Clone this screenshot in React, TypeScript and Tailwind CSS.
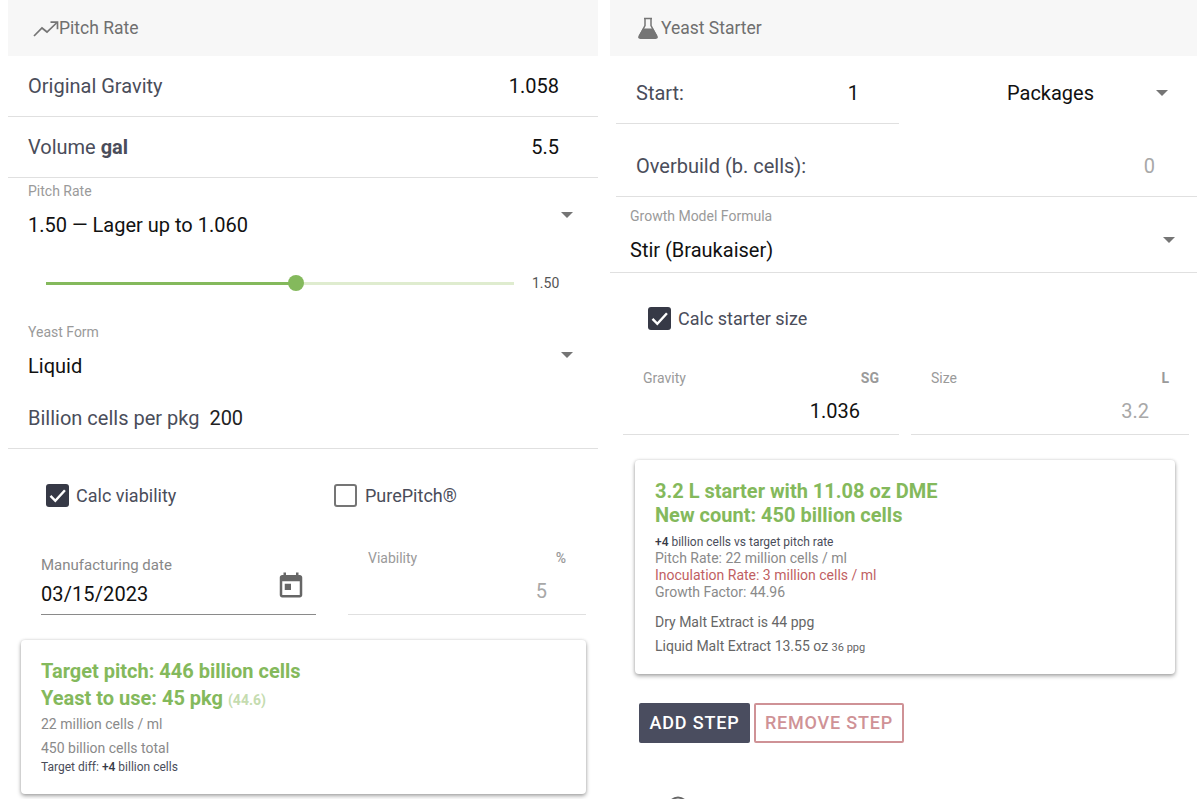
import React from "react";

const Arrow = ({ className = "" }: { className?: string }) => (
  <svg width="12" height="6" viewBox="0 0 10 5" className={className}><path d="M0 0l5 5 5-5z" fill="#757575" /></svg>
);

const Check = ({ on, className = "" }: { on: boolean; className?: string }) => (
  <span className={`w-[23px] h-[23px] rounded-[3px] flex items-center justify-center shrink-0 ${on ? "bg-[#363946]" : "border-2 border-[#757575] bg-white"} ${className}`}>
    {on && (
      <svg width="21" height="21" viewBox="0 0 24 24"><path d="M4 12.5l5.500 5.500L20.500 6" fill="none" stroke="#fff" strokeWidth="2.800" /></svg>
    )}
  </span>
);

const Head = ({ icon, title, className = "" }: { icon: React.ReactNode; title: string; className?: string }) => (
  <div className={`h-14 bg-[#f7f7f7] flex items-center text-[17.5px] text-[#6f6f6f] ${className}`}>
    {icon}
    <span>{title}</span>
  </div>
);

export default function App() {
  return (
    <div className="w-[1197px] h-[799px] overflow-hidden bg-white flex items-start pl-2 text-[#4a4d5a]" style={{ fontFamily: "Roboto, sans-serif" }}>
      {/* Left */}
      <div className="w-[590px] shrink-0 flex flex-col">
        <Head
          className="pl-[25px]"
          title="Pitch Rate"
          icon={
            <svg width="26" height="16" viewBox="0 0 26 16" fill="none" stroke="#757575" strokeWidth="1.700" className="mt-0.5">
              <path d="M1 15l8-8 5 4 10-9.500" />
              <path d="M17.500 1.200h7v7" />
            </svg>
          }
        />
        <div className="h-[61px] border-b border-[#e0e0e0] pl-5 pr-[39px] flex items-center justify-between text-xl">
          <span>Original Gravity</span>
          <span className="text-[#111]">1.058</span>
        </div>
        <div className="h-[61px] border-b border-[#e0e0e0] pl-5 pr-[39px] flex items-center justify-between text-xl">
          <span>Volume <b className="font-bold">gal</b></span>
          <span className="text-[#111]">5.5</span>
        </div>
        <div className="relative pl-5 pt-[5px]">
          <div className="text-sm leading-4 text-[#9a9a9a]">Pitch Rate</div>
          <div className="mt-[14px] text-xl leading-[24px] text-[#111]">1.50 — Lager up to 1.060</div>
          <Arrow className="absolute right-[25px] top-[34px]" />
        </div>
        <div className="h-[73px] pl-[38px] flex items-center pt-[19px]">
          <div className="w-[468px] h-[3px] bg-[#dfeccf] relative">
            <div className="absolute left-0 top-0 h-[3px] w-[250px] bg-[#84b95c]" />
            <div className="absolute left-[242px] top-[-7px] w-4 h-4 rounded-full bg-[#84b95c]" />
          </div>
          <span className="ml-[18px] text-sm text-[#555]">1.50</span>
        </div>
        <div className="relative pl-5 pt-[14px]">
          <div className="text-sm leading-4 text-[#9a9a9a]">Yeast Form</div>
          <div className="mt-[14px] text-xl leading-[24px] text-[#111]">Liquid</div>
          <Arrow className="absolute right-[25px] top-[42px]" />
        </div>
        <div className="h-[66px] border-b border-[#e0e0e0] pl-5 flex items-center text-xl pt-[9px] pb-[5px] mt-[5px]">
          <span>Billion cells per pkg</span>
          <span className="ml-[10px] text-[#222]">200</span>
        </div>
        <div className="pl-[38px] mt-[35px] flex items-center h-[23px] text-lg">
          <Check on />
          <span className="ml-[7px] w-[258px]">Calc viability</span>
          <Check on={false} />
          <span className="ml-[8px]">PurePitch®</span>
        </div>
        <div className="mt-[40px] flex pl-[33px] h-[68px]">
          <div className="relative w-[275px] h-[68px] border-b border-[#8a8a8a] pt-[8px]">
            <div className="text-[15px] leading-5 text-[#888]">Manufacturing date</div>
            <div className="mt-[7px] text-[20px] leading-6 tracking-[0.1px] text-[#111]">03/15/2023</div>
            <svg width="30" height="30" viewBox="0 0 24 24" className="absolute right-[10px] top-[23px]"><path fill="#666" d="M19 4h-1V2h-2v2H8V2H6v2H5c-1.110 0-1.990.9-1.990 2L3 20c0 1.100.89 2 2 2h14c1.100 0 2-.9 2-2V6c0-1.100-.9-2-2-2zm0 16H5V9h14v11zM7 11h5v5H7z" /></svg>
          </div>
          <div className="relative ml-8 w-[238px] h-[68px] border-b border-[#e0e0e0]">
            <div className="flex justify-between pl-5 pr-5 text-sm leading-4 text-[#9a9a9a] pt-[3px]">
              <span>Viability</span>
              <b className="font-medium">%</b>
            </div>
            <div className="absolute right-[39px] top-[32px] text-xl leading-6 text-[#a8a8a8]">5</div>
          </div>
        </div>
        <div className="ml-[13px] mt-[25px] w-[565px] h-[154px] rounded-[4px] bg-white shadow-[0_2px_4px_rgba(0,0,0,0.35),0_0_3px_rgba(0,0,0,0.12)] pl-5 pt-[18px]">
          <div className="text-xl leading-[27px] font-bold text-[#84b95c]">Target pitch: 446 billion cells</div>
          <div className="text-xl leading-[27px] font-bold text-[#84b95c]">
            Yeast to use: 45 pkg <span className="text-sm font-bold text-[#c5dcb0]">(44.6)</span>
          </div>
          <div className="text-sm leading-5 mt-[2px] text-[#8a8a8a]">22 million cells / ml</div>
          <div className="text-sm leading-5 mt-[4px] text-[#8a8a8a]">450 billion cells total</div>
          <div className="text-xs leading-[18px] text-[#4a4d5a]">Target diff: <b className="font-medium text-[#363946]">+4</b> billion cells</div>
        </div>
      </div>

      {/* Right */}
      <div className="ml-3 w-[587px] shrink-0 flex flex-col">
        <Head
          className="pl-[28px]"
          title="Yeast Starter"
          icon={
            <svg width="20" height="22" viewBox="0 0 20 22" className="mr-[3px]">
              <path d="M6 1.500h8M7 1.500v7L1.800 18.500M13 1.500v7l5.200 10" fill="none" stroke="#757575" strokeWidth="1.500" />
              <path d="M4.800 11.500h10.400l4.400 7.500q.8 3-2 3H2.400q-2.800 0-2-3z" fill="#757575" />
            </svg>
          }
        />
        <div className="h-[68px] flex">
          <div className="ml-1.5 w-[283px] border-b border-[#e0e0e0] pl-5 pr-10 flex items-center justify-between text-xl pt-[14px] pb-[7px] h-[68px]">
            <span>Start:</span>
            <span className="text-[#111]">1</span>
          </div>
          <div className="flex-1 flex items-center justify-between pl-[108px] pr-[29px] text-xl text-[#111] h-[74px]">
            <span className="-mt-[1px]">Packages</span>
            <Arrow />
          </div>
        </div>
        <div className="ml-1.5 mt-[5px] h-[68px] border-b border-[#e0e0e0] pl-5 pr-[42px] flex items-center justify-between text-xl pt-[6px]">
          <span>Overbuild (b. cells):</span>
          <span className="text-[#a8a8a8]">0</span>
        </div>
        <div className="relative h-[76px] border-b border-[#e0e0e0] pl-5 pt-[11px]">
          <div className="text-sm leading-4 text-[#9a9a9a]">Growth Model Formula</div>
          <div className="mt-[14px] text-xl leading-[24px] text-[#111]">Stir (Braukaiser)</div>
          <Arrow className="absolute right-[22px] top-[40px]" />
        </div>
        <div className="pl-[38px] mt-[34px] flex items-center h-[23px] text-lg">
          <Check on />
          <span className="ml-[7px]">Calc starter size</span>
        </div>
        <div className="mt-[23px] h-[82px] flex pl-[13px]">
          <div className="relative w-[276px] border-b border-[#e0e0e0]">
            <div className="flex justify-between pl-5 pr-5 pt-[17px] text-sm leading-4 text-[#9a9a9a]">
              <span>Gravity</span>
              <b className="font-bold">SG</b>
            </div>
            <div className="absolute right-[39px] top-[46px] text-xl leading-6 text-[#111]">1.036</div>
          </div>
          <div className="relative ml-3 w-[278px] border-b border-[#e0e0e0]">
            <div className="flex justify-between pl-5 pr-5 pt-[17px] text-sm leading-4 text-[#9a9a9a]">
              <span>Size</span>
              <b className="font-bold">L</b>
            </div>
            <div className="absolute right-[40px] top-[46px] text-xl leading-6 text-[#a8a8a8]">3.2</div>
          </div>
        </div>
        <div className="ml-[25px] mt-[25px] w-[540px] h-[214px] rounded-[4px] bg-white shadow-[0_2px_4px_rgba(0,0,0,0.35),0_0_3px_rgba(0,0,0,0.12)] pl-5 pt-[19px]">
          <div className="text-xl leading-6 font-bold text-[#84b95c]">3.2 L starter with 11.08 oz DME</div>
          <div className="text-xl leading-6 font-bold text-[#84b95c]">New count: 450 billion cells</div>
          <div className="text-xs leading-[18px] mt-[6px] text-[#4a4d5a]"><b className="font-medium text-[#363946]">+4</b> billion cells vs target pitch rate</div>
          <div className="text-sm leading-[17px] -mt-px text-[#8a8a8a]">Pitch Rate: 22 million cells / ml</div>
          <div className="text-sm leading-[20px] -my-[2px] text-[#bf5f63]">Inoculation Rate: 3 million cells / ml</div>
          <div className="text-sm leading-[17px] mt-px text-[#8a8a8a]">Growth Factor: 44.96</div>
          <div className="text-sm leading-5 mt-[11px] text-[#666]">Dry Malt Extract is 44 ppg</div>
          <div className="text-sm leading-5 mt-1 text-[#666]">Liquid Malt Extract 13.55 oz <span className="text-[11px]">36 ppg</span></div>
        </div>
        <div className="mt-[29px] ml-[29px] flex gap-1 h-10 text-lg font-medium tracking-[0.8px]">
          <div className="w-[111px] h-10 rounded-[2px] bg-[#4a4d5f] text-white flex items-center justify-center">ADD STEP</div>
          <div className="w-[150px] h-10 rounded-[2px] border-2 border-[#cf9296] text-[#cf9296] flex items-center justify-center">REMOVE STEP</div>
        </div>
        <svg width="22" height="22" viewBox="0 0 22 22" className="ml-[57px] mt-[53px] shrink-0"><circle cx="11" cy="11" r="9.500" fill="none" stroke="#666" strokeWidth="2" /></svg>
      </div>
    </div>
  );
}
